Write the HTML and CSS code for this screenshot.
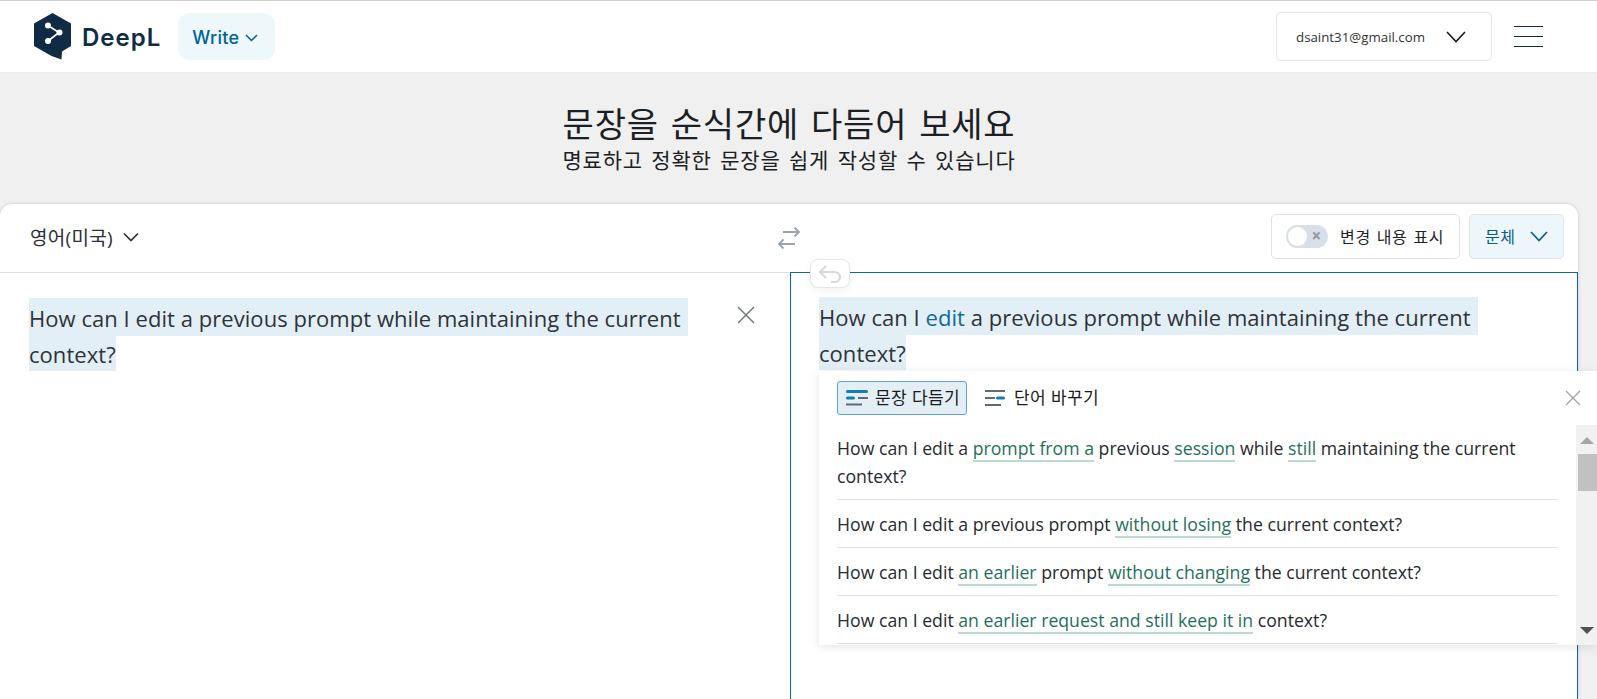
FILE: index.html
```html
<!DOCTYPE html>
<html lang="ko">
<head>
  <meta charset="UTF-8">
  <title>DeepL Write</title>
  <link rel="stylesheet" href="styles.css">
</head>
<body>

  <div class="header">
    <div class="logo">
      <svg width="38" height="48" viewBox="0 0 38 48">
        <path d="M18.5 0 L37 10.5 V33 L28 38.5 L27.5 46.5 L17.5 43 L0 33 V10.5 Z" fill="#0f2b46"/>
        <path d="M14 12.5 L25 19.5 L14 28" fill="none" stroke="#fff" stroke-width="1.6"/>
        <circle cx="14" cy="12.5" r="3" fill="#fff"/>
        <circle cx="25.5" cy="19.5" r="3" fill="#fff"/>
        <circle cx="14" cy="28" r="3" fill="#fff"/>
      </svg>
      <span class="logo-text">DeepL</span>
    </div>
    <button class="write-btn">Write
      <svg width="13" height="8" viewBox="0 0 13 8"><path d="M1 1 L6.5 6.5 L12 1" fill="none" stroke="#006494" stroke-width="1.5"/></svg>
    </button>
    <div class="header-right">
      <div class="account">
        <span>dsaint31@gmail.com</span>
        <svg width="20" height="12" viewBox="0 0 20 12"><path d="M1 1 L10 10.5 L19 1" fill="none" stroke="#1a1a1a" stroke-width="1.6"/></svg>
      </div>
      <div class="menu-icon"><i></i><i></i><i></i></div>
    </div>
  </div>

  <div class="hero">
    <h1>문장을 순식간에 다듬어 보세요</h1>
    <p>명료하고 정확한 문장을 쉽게 작성할 수 있습니다</p>
  </div>

  <div class="card">
    <div class="toolbar">
      <div class="lang">영어(미국)
        <svg width="16" height="10" viewBox="0 0 16 10"><path d="M1 1.5 L8 8.5 L15 1.5" fill="none" stroke="#2b2f36" stroke-width="1.7"/></svg>
      </div>
      <svg class="swap" width="24" height="24" viewBox="0 0 24 24">
        <path d="M6 6 H22 M17.5 1.5 L22 6 L17.5 10.5 M18 18 H2 M6.5 13.5 L2 18 L6.5 22.5" fill="none" stroke="#9aa3ae" stroke-width="1.8"/>
      </svg>
      <div class="tools">
        <div class="changes">
          <span class="toggle"><span class="knob"></span><span class="toggle-x">×</span></span>
          <span>변경 내용 표시</span>
        </div>
        <div class="style-btn">문체
          <svg width="18" height="11" viewBox="0 0 18 11"><path d="M1 1 L9 9.5 L17 1" fill="none" stroke="#0b5c85" stroke-width="1.7"/></svg>
        </div>
      </div>
    </div>

    <div class="panes">
      <div class="pane source">
        <div class="text">
          <span class="hl hl-first">How can I edit a previous prompt while maintaining the current</span><br>
          <span class="hl">context?</span>
        </div>
        <svg class="clear" width="18" height="18" viewBox="0 0 18 18"><path d="M1 1 L17 17 M17 1 L1 17" stroke="#6b7280" stroke-width="1.4"/></svg>
      </div>
      <div class="pane target">
        <div class="text">
          <span class="hl hl-first">How can I <b class="edit">edit</b> a previous prompt while maintaining the current</span><br>
          <span class="hl">context?</span>
        </div>

        <div class="undo">
          <svg width="24" height="20" viewBox="0 0 24 20"><path d="M8 2 L2 8 L8 14 M2 8 H16 C24 8 24 18 16 18 H13" fill="none" stroke="#d9d9d9" stroke-width="2.2"/></svg>
        </div>

        <div class="popup">
          <div class="popup-head">
            <div class="tab tab-active">
              <svg width="22" height="16" viewBox="0 0 22 16">
                <rect x="0" y="0" width="22" height="3" rx="1.5" fill="#0f7fb5"/>
                <rect x="0" y="6.5" width="9" height="3" rx="1.5" fill="#0f7fb5"/>
                <rect x="12" y="7" width="10" height="2" fill="#5f6b76"/>
                <rect x="0" y="13.5" width="16" height="2" fill="#5f6b76"/>
              </svg>
              문장 다듬기
            </div>
            <div class="tab">
              <svg width="22" height="16" viewBox="0 0 22 16">
                <rect x="0" y="0" width="20" height="2" fill="#5f6b76"/>
                <rect x="0" y="7" width="10" height="2" fill="#5f6b76"/>
                <rect x="11" y="6.5" width="9" height="3" rx="1.5" fill="#0f7fb5"/>
                <rect x="0" y="14" width="16" height="2" fill="#5f6b76"/>
              </svg>
              단어 바꾸기
            </div>
            <svg class="popup-close" width="16" height="16" viewBox="0 0 16 16"><path d="M1 1 L15 15 M15 1 L1 15" stroke="#a3a3a3" stroke-width="1.3"/></svg>
          </div>
          <div class="popup-body">
            <ul class="suggestions">
              <li>How can I edit a <em>prompt from a</em> previous <em>session</em> while <em>still</em> maintaining the current context?</li>
              <li>How can I edit a previous prompt <em>without losing</em> the current context?</li>
              <li>How can I edit <em>an earlier</em> prompt <em>without changing</em> the current context?</li>
              <li>How can I edit <em>an earlier request and still keep it in</em> context?</li>
            </ul>
            <div class="scrollbar">
              <span class="arrow-up"></span>
              <span class="thumb"></span>
              <span class="arrow-down"></span>
            </div>
          </div>
        </div>
      </div>
    </div>
  </div>

</body>
</html>
```

FILE: styles.css
```css
html, body {
  height: 699px;
  overflow: hidden;
}

body {
  font-family: 'Open Sans', 'Noto Sans CJK KR', sans-serif;
  margin: 0;
  padding: 0;
  background-color: #f0f0f0;
  color: #1f2328;
}

.header {
  display: flex;
  align-items: center;
  height: 73px;
  box-sizing: border-box;
  background-color: white;
  border-top: 1px solid #cfcfcf;
  border-bottom: 1px solid #ececec;
  padding: 0 54px 0 34px;
}

.logo {
  display: flex;
  align-items: center;
  gap: 10px;
  margin-top: 1px;
}

.logo-text {
  font-family: 'Inter', sans-serif;
  font-size: 24px;
  font-weight: 600;
  letter-spacing: 1px;
  color: #0f2b46;
}

.write-btn {
  display: flex;
  align-items: center;
  gap: 6px;
  margin-left: 17px;
  padding: 2px 3px 0 0;
  height: 47px;
  width: 97px;
  justify-content: center;
  background-color: #eef7fa;
  color: #006494;
  border: none;
  border-radius: 12px;
  font-family: 'Inter', sans-serif;
  font-size: 18px;
  font-weight: 500;
  letter-spacing: 0.3px;
}

.header-right {
  display: flex;
  align-items: center;
  gap: 22px;
  margin-left: auto;
}

.account {
  display: flex;
  align-items: center;
  justify-content: space-between;
  box-sizing: border-box;
  width: 216px;
  height: 49px;
  padding: 0 25px 0 19px;
  border: 1px solid #e1e5ec;
  border-radius: 5px;
  font-size: 13.3px;
  color: #333;
}

.menu-icon {
  width: 29px;
}

.menu-icon i {
  display: block;
  height: 1px;
  background-color: #0f2b46;
  margin: 9px 0;
}

.hero {
  width: 1578px;
  height: 131px;
  box-sizing: border-box;
  padding-top: 29px;
  text-align: center;
  color: #1c1f24;
}

.hero h1 {
  margin: 0;
  font-size: 34px;
  font-weight: 400;
  line-height: 44px;
  letter-spacing: 0.8px;
  word-spacing: 2.3px;
}

.hero p {
  margin: 0;
  font-size: 21px;
  line-height: 28px;
  letter-spacing: 0.8px;
  word-spacing: 2.2px;
}

.card {
  width: 1578px;
  height: 495px;
  background-color: white;
  border-radius: 12px 12px 0 0;
  box-shadow: 0 0 3px rgba(60, 80, 110, 0.3);
}

.toolbar {
  display: grid;
  grid-template-columns: 1fr auto 1fr;
  align-items: center;
  height: 68px;
  box-sizing: border-box;
  padding: 0 14px 0 30px;
}

.lang {
  display: flex;
  align-items: center;
  gap: 10px;
  margin-top: -2px;
  font-size: 19px;
  letter-spacing: 0.3px;
  color: #2b2f36;
}

.swap {
  display: block;
  margin-left: -16px;
}

.tools {
  display: flex;
  justify-content: flex-end;
  gap: 9px;
  margin-top: -4px;
}

.changes, .style-btn {
  display: flex;
  align-items: center;
  box-sizing: border-box;
  height: 45px;
  border: 1px solid #e0e3e8;
  border-radius: 5px;
  font-size: 16px;
}

.changes {
  width: 189px;
  padding-left: 14px;
  gap: 12px;
  letter-spacing: 0.7px;
  word-spacing: 1px;
}

.style-btn {
  width: 95px;
  padding-left: 15px;
  gap: 15px;
  background-color: #ecf6fb;
  color: #0b5c85;
  letter-spacing: 0.5px;
}

.toggle {
  display: flex;
  align-items: center;
  justify-content: flex-end;
  position: relative;
  width: 42px;
  height: 23px;
  border-radius: 12px;
  background-color: #d9dfe8;
}

.knob {
  position: absolute;
  left: 2px;
  top: 2px;
  width: 19px;
  height: 19px;
  border-radius: 50%;
  background-color: white;
}

.toggle-x {
  margin-right: 6px;
  font-size: 17px;
  font-weight: 700;
  line-height: 20px;
  color: #8f98a3;
}

.panes {
  display: grid;
  grid-template-columns: 790px 1fr;
  height: 427px;
}

.pane {
  position: relative;
  box-sizing: border-box;
  font-size: 22px;
  line-height: 36px;
  letter-spacing: 0.05px;
  color: #2f3338;
}

.source {
  border-top: 1px solid #dae1e8;
  padding: 27px 0 0 29px;
}

.target {
  border: 1px solid #0f6a99;
  border-bottom: none;
  padding: 26px 0 0 28px;
}

.hl {
  background-color: #e3eff7;
  padding: 5px 0 2px;
}

.hl-first {
  padding: 5px 7px 3px 0;
}

.edit {
  font-weight: 400;
  color: #0f6a99;
}

.clear {
  position: absolute;
  left: 737px;
  top: 33px;
}

.undo {
  position: absolute;
  left: 19px;
  top: -14px;
  display: flex;
  align-items: center;
  justify-content: center;
  width: 40px;
  height: 29px;
  box-sizing: border-box;
  background-color: white;
  border: 1px solid #e3e7ec;
  border-radius: 8px;
  box-shadow: 0 2px 8px rgba(0, 0, 0, 0.06);
}

.popup {
  position: absolute;
  left: 28px;
  top: 98px;
  width: 778px;
  height: 274px;
  background-color: white;
  box-shadow: 0 2px 10px rgba(0, 0, 0, 0.1);
  font-size: 17.68px;
  line-height: 28px;
  letter-spacing: 0;
  color: #262a2f;
}

.popup-head {
  display: flex;
  align-items: center;
  gap: 18px;
  height: 54px;
  box-sizing: border-box;
  padding: 10px 0 10px 18px;
  position: relative;
}

.tab {
  display: flex;
  align-items: center;
  gap: 7px;
  height: 34px;
  box-sizing: border-box;
  font-size: 17px;
  letter-spacing: 0.4px;
  color: #1a1a1a;
}

.tab-active {
  width: 130px;
  padding-left: 8px;
  background-color: #e3eff5;
  border: 1px solid #5fa3c7;
  border-radius: 3px;
}

.popup-close {
  position: absolute;
  left: 746px;
  top: 19px;
}

.popup-body {
  display: flex;
  height: 220px;
}

.suggestions {
  list-style: none;
  flex: 1;
  margin: 0;
  padding: 9px 19px 0 18px;
}

.suggestions li {
  padding-bottom: 9px;
  margin-bottom: 10px;
  border-bottom: 1px solid #dedede;
}

.suggestions em {
  font-style: normal;
  color: #1f6f5c;
  border-bottom: 2px solid #b8dccf;
}

.scrollbar {
  display: flex;
  flex-direction: column;
  align-items: center;
  width: 21px;
  background-color: #f1f1f1;
}

.arrow-up {
  margin-top: 12px;
  border: 7px solid transparent;
  border-top: none;
  border-bottom-color: #a6a6a6;
}

.thumb {
  width: 19px;
  height: 37px;
  margin: 10px 0 0 2px;
  background-color: #c1c1c1;
}

.arrow-down {
  margin-top: auto;
  margin-bottom: 11px;
  border: 7px solid transparent;
  border-bottom: none;
  border-top-color: #505050;
}
```
